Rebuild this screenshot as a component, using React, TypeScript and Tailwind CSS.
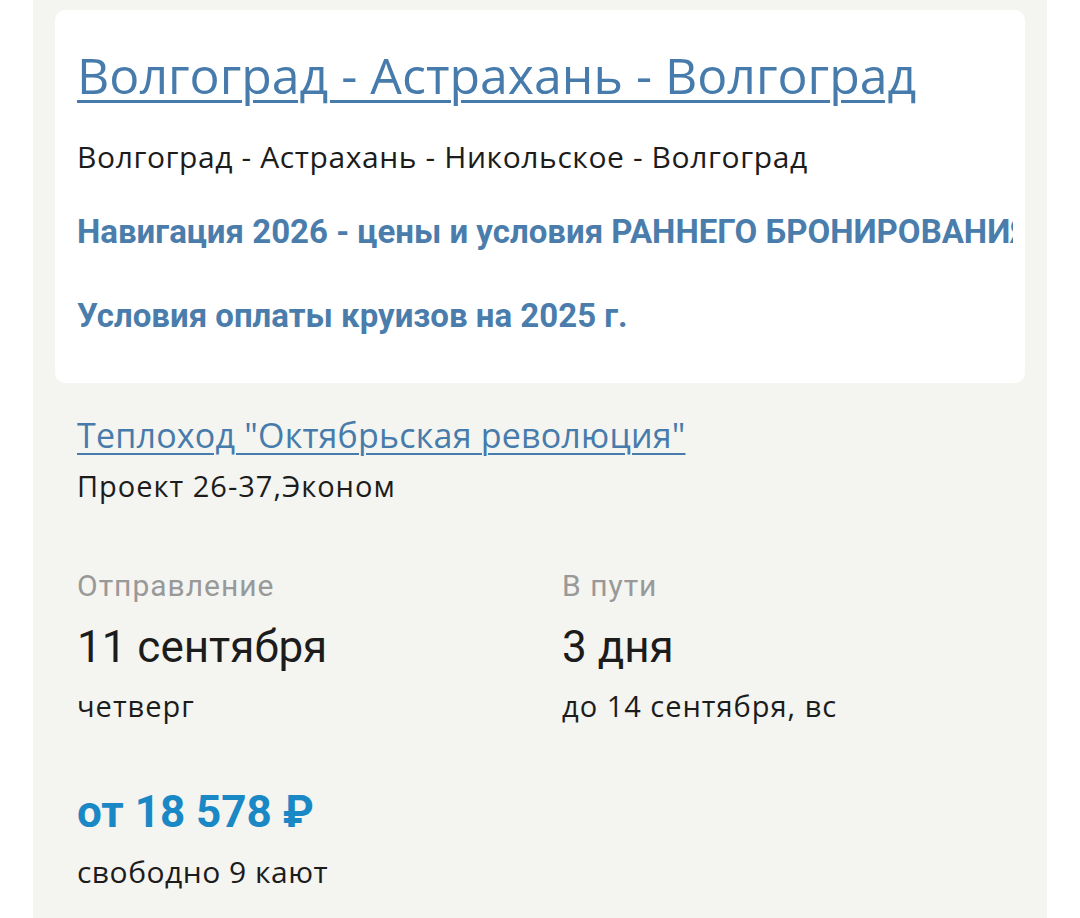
import React from "react";

export default function App() {
  return (
    <div className="w-[1080px] h-[918px] bg-white overflow-hidden">
      <div className="ml-[33px] w-[1014px] h-[918px] bg-[#f4f4f0] px-[22px] pt-[10px]">
        <div className="bg-white rounded-[10px] h-[373px] pl-[22px] pr-[12px] pt-[35px] overflow-hidden">
          <a className="block whitespace-nowrap font-['Open_Sans',sans-serif] text-[50px] leading-[60px] text-[#467bab] underline decoration-[3px] underline-offset-[6px]">
            Волгоград - Астрахань - Волгоград
          </a>
          <div className="mt-[34px] font-['Open_Sans',sans-serif] text-[30px] tracking-[0.6px] leading-[36px] text-[#1c1c1c] whitespace-nowrap">
            Волгоград - Астрахань - Никольское - Волгоград
          </div>
          <div className="mt-[38px] font-['Roboto',sans-serif] text-[33px] leading-[38px] font-bold text-[#4a7dab] whitespace-nowrap overflow-hidden">
            Навигация 2026 - цены и условия РАННЕГО БРОНИРОВАНИЯ
          </div>
          <div className="mt-[46px] font-['Roboto',sans-serif] text-[33px] leading-[38px] font-bold text-[#4a7dab] whitespace-nowrap">
            Условия оплаты круизов на 2025 г.
          </div>
        </div>

        <div className="px-[22px]">
          <a className="block mt-[30px] font-['Open_Sans',sans-serif] text-[34px] tracking-[0.2px] leading-[44px] text-[#467bab] underline decoration-[2px] underline-offset-[5px] whitespace-nowrap">
            Теплоход "Октябрьская революция"
          </a>
          <div className="mt-[11px] font-['Open_Sans',sans-serif] text-[29px] tracking-[1px] leading-[36px] text-[#1c1c1c]">
            Проект 26-37,Эконом
          </div>

          <div className="mt-[64px] grid grid-cols-[485px_1fr]">
            <div className="flex flex-col">
              <div className="font-['Roboto',sans-serif] text-[30px] tracking-[1px] leading-[36px] text-[#999999]">Отправление</div>
              <div className="mt-[16px] font-['Roboto',sans-serif] text-[44px] leading-[54px] text-[#1c1c1c]">11 сентября</div>
              <div className="mt-[14px] font-['Open_Sans',sans-serif] text-[29px] tracking-[1px] leading-[36px] text-[#1c1c1c]">четверг</div>
            </div>
            <div className="flex flex-col">
              <div className="font-['Roboto',sans-serif] text-[30px] tracking-[1px] leading-[36px] text-[#999999]">В пути</div>
              <div className="mt-[16px] font-['Roboto',sans-serif] text-[44px] leading-[54px] text-[#1c1c1c]">3 дня</div>
              <div className="mt-[14px] font-['Open_Sans',sans-serif] text-[29px] tracking-[1px] leading-[36px] text-[#1c1c1c]">до 14 сентября, вс</div>
            </div>
          </div>

          <div className="mt-[62px] font-['Roboto',sans-serif] text-[44px] leading-[52px] font-bold text-[#1a88c4]">
            от 18 578 ₽
          </div>
          <div className="mt-[16px] font-['Open_Sans',sans-serif] text-[30px] tracking-[0.5px] leading-[36px] text-[#1c1c1c]">
            свободно 9 кают
          </div>
        </div>
      </div>
    </div>
  );
}
